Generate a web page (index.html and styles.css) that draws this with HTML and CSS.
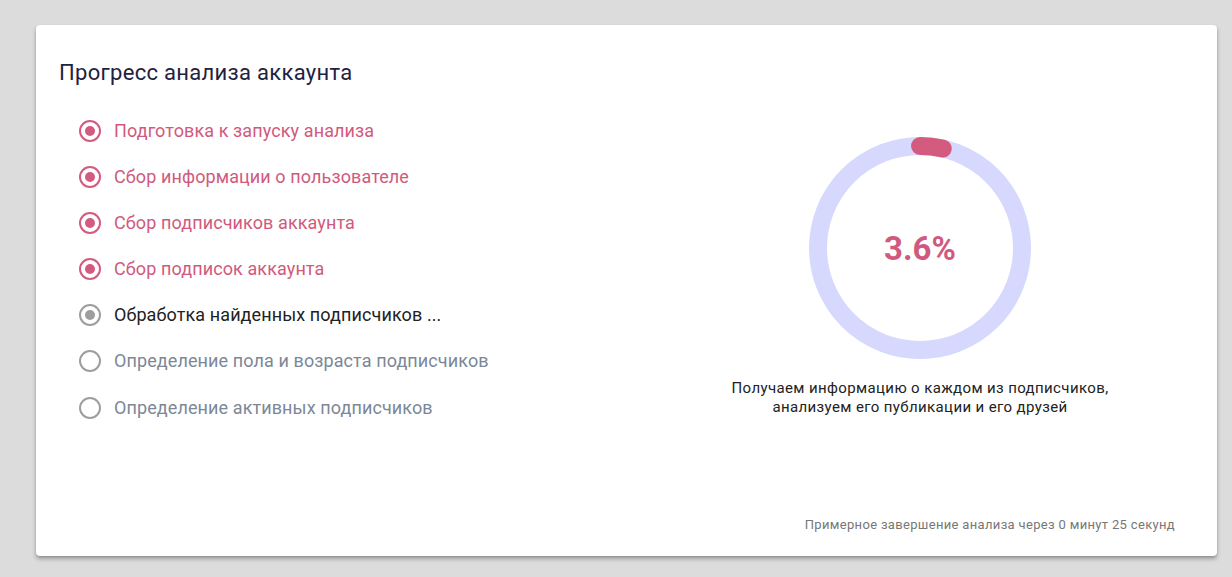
FILE: index.html
```html
<!DOCTYPE html>
<html lang="ru">
<head>
<meta charset="utf-8">
<title>Прогресс анализа аккаунта</title>
<link rel="stylesheet" href="styles.css">
</head>
<body>
<div class="card">
  <h1 class="title">Прогресс анализа аккаунта</h1>
  <div class="content">
    <ul class="steps">
      <li class="step done"><span class="radio"></span><span class="label">Подготовка к запуску анализа</span></li>
      <li class="step done"><span class="radio"></span><span class="label">Сбор информации о пользователе</span></li>
      <li class="step done"><span class="radio"></span><span class="label">Сбор подписчиков аккаунта</span></li>
      <li class="step done"><span class="radio"></span><span class="label">Сбор подписок аккаунта</span></li>
      <li class="step active"><span class="radio"></span><span class="label">Обработка найденных подписчиков ...</span></li>
      <li class="step pending"><span class="radio"></span><span class="label">Определение пола и возраста подписчиков</span></li>
      <li class="step pending"><span class="radio"></span><span class="label">Определение активных подписчиков</span></li>
    </ul>
    <div class="progress">
      <div class="ring">
        <svg width="222" height="222" viewBox="0 0 222 222">
          <circle cx="111" cy="111" r="102" fill="none" stroke="#d6d9fd" stroke-width="18"/>
          <circle cx="111" cy="111" r="102" fill="none" stroke="#d45b80" stroke-width="18" stroke-linecap="round" stroke-dasharray="23.07 640.88" transform="rotate(-90 111 111)"/>
        </svg>
        <div class="percent">3.6%</div>
      </div>
      <p class="caption">Получаем информацию о каждом из подписчиков,<br>анализуем его публикации и его друзей</p>
    </div>
  </div>
  <div class="footer">Примерное завершение анализа через 0 минут 25 секунд</div>
</div>
</body>
</html>
```

FILE: styles.css
```css
html, body {
  margin: 0;
  padding: 0;
}
body {
  background: #dcdcdc;
  font-family: Roboto, "Liberation Sans", sans-serif;
  height: 577px;
  overflow: hidden;
}
.card {
  box-sizing: border-box;
  margin: 25px 0 0 36px;
  width: 1181px;
  height: 531px;
  background: #fff;
  border-radius: 4px;
  box-shadow: 0 3px 4px rgba(0,0,0,0.28), 0 1px 2px rgba(0,0,0,0.12);
  padding: 34px 23px 23px 23px;
  display: flex;
  flex-direction: column;
}
.title {
  margin: 0;
  font-size: 22px;
  line-height: 28px;
  font-weight: 400;
  letter-spacing: 0.3px;
  color: #1f2240;
}
.content {
  display: flex;
  margin-top: 21px;
}
.steps {
  list-style: none;
  margin: 0;
  padding: 0 0 0 20px;
  width: 567px;
}
.step {
  display: flex;
  align-items: center;
  height: 46px;
  font-size: 18px;
  line-height: 46px;
  letter-spacing: 0.1px;
}
.step:nth-child(7) {
  height: 48px;
  line-height: 48px;
}
.radio {
  box-sizing: border-box;
  width: 22px;
  height: 22px;
  border-radius: 50%;
  border: 2px solid #9e9e9e;
  margin-right: 13px;
  display: flex;
  align-items: center;
  justify-content: center;
  flex: none;
}
.radio::after {
  content: "";
  width: 10px;
  height: 10px;
  border-radius: 50%;
}
.done .radio { border-color: #d45b80; }
.done .radio::after { background: #d45b80; }
.done .label { color: #d05a7e; }
.active .radio::after { background: #9e9e9e; }
.active .label { color: #222; }
.pending .label { color: #7c8897; }
.progress {
  flex: 1;
  display: flex;
  flex-direction: column;
  align-items: center;
  padding-top: 29px;
}
.ring {
  position: relative;
  width: 222px;
  height: 222px;
}
.ring svg { display: block; }
.percent {
  position: absolute;
  inset: 0;
  display: flex;
  align-items: center;
  justify-content: center;
  font-size: 33px;
  font-weight: 700;
  color: #d05a7e;
}
.caption {
  margin: 20px 0 0 0;
  text-align: center;
  font-size: 15px;
  line-height: 19px;
  letter-spacing: 0.38px;
  color: #222;
}
.footer {
  margin-top: auto;
  align-self: flex-end;
  margin-right: 19px;
  font-size: 13px;
  line-height: 16px;
  letter-spacing: 0.33px;
  color: #777;
}
```
